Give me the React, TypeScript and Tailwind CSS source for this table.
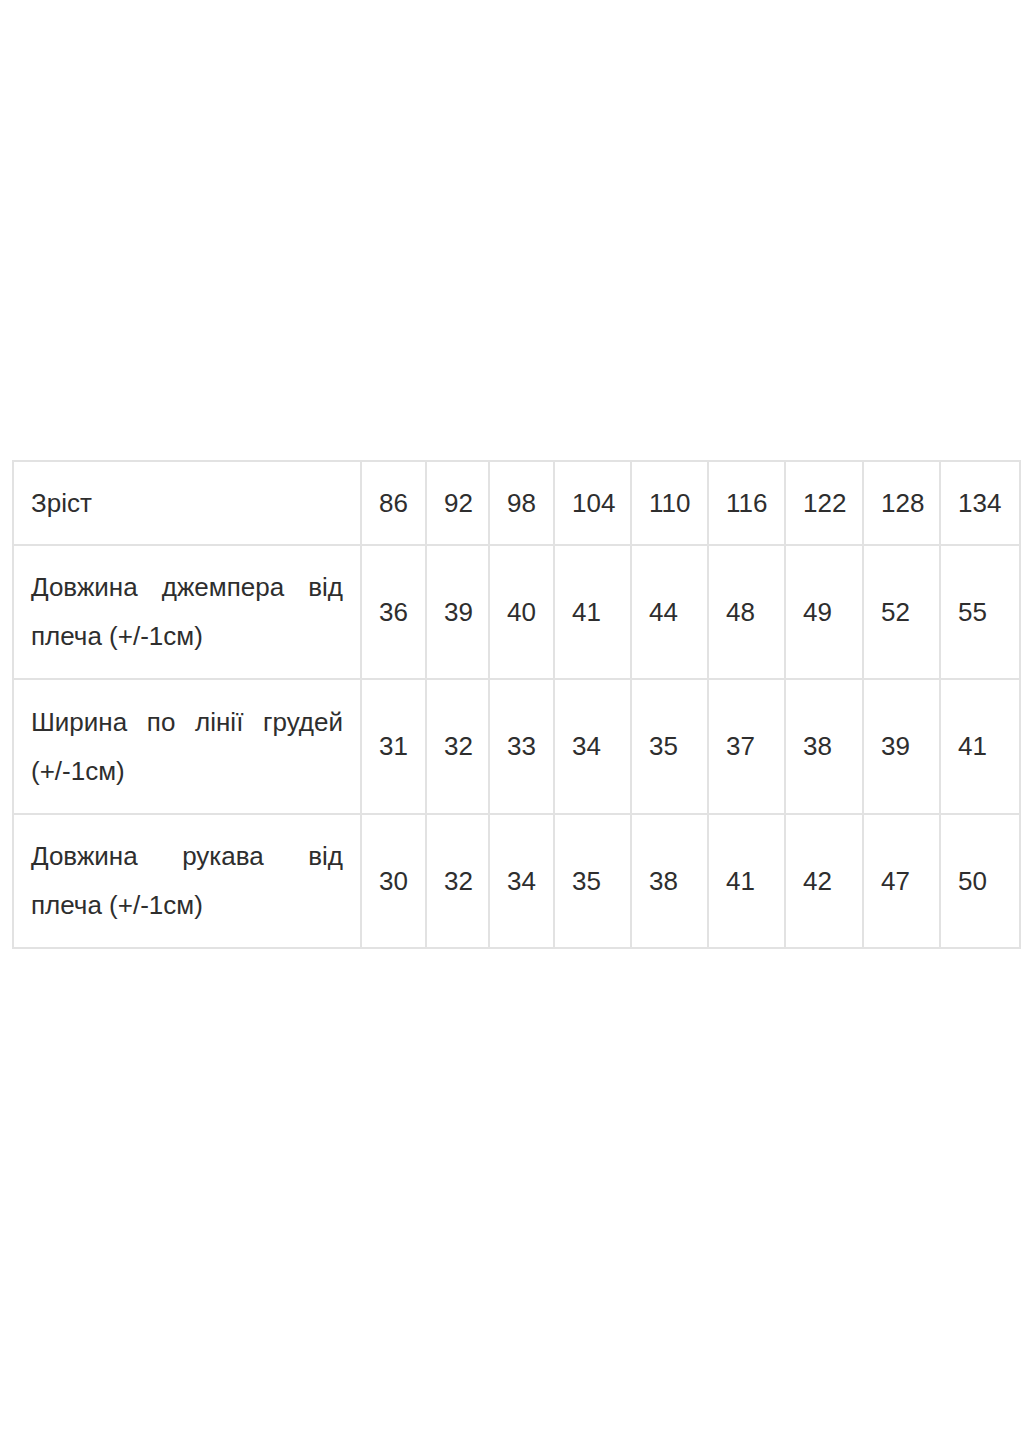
const sizes = ["86", "92", "98", "104", "110", "116", "122", "128", "134"];

const rows: { label: string; values: string[]; h: string }[] = [
  { label: "Довжина джемпера від плеча (+/-1см)", values: ["36", "39", "40", "41", "44", "48", "49", "52", "55"], h: "h-[134px]" },
  { label: "Ширина по лінії грудей (+/-1см)", values: ["31", "32", "33", "34", "35", "37", "38", "39", "41"], h: "h-[135px]" },
  { label: "Довжина рукава від плеча (+/-1см)", values: ["30", "32", "34", "35", "38", "41", "42", "47", "50"], h: "h-[134px]" },
];

const colWidths = ["w-[348px]", "w-[65px]", "w-[63px]", "w-[65px]", "w-[77px]", "w-[77px]", "w-[77px]", "w-[78px]", "w-[77px]", "w-[80px]"];

const base = "border-2 border-[#e2e2e2] px-[17px] py-4 align-middle";
const cell = `${base} text-left`;

export default function App() {
  return (
    <div className="min-h-[1440px] w-[1035px] bg-white pt-[460px] pl-[12px] font-['Liberation_Sans',Arial,sans-serif] text-[26px] leading-[49px] text-[#2e2e2e]">
      <table className="w-[1009px] table-fixed border-collapse">
        <colgroup>
          {colWidths.map((w, i) => (
            <col key={i} className={w} />
          ))}
        </colgroup>
        <tbody>
          <tr className="h-[84px]">
            <td className={cell}>Зріст</td>
            {sizes.map((s) => (
              <td key={s} className={cell}>
                {s}
              </td>
            ))}
          </tr>
          {rows.map((r) => (
            <tr key={r.label} className={r.h}>
              <td className={`${base} text-justify`}>{r.label}</td>
              {r.values.map((v, i) => (
                <td key={i} className={cell}>
                  {v}
                </td>
              ))}
            </tr>
          ))}
        </tbody>
      </table>
    </div>
  );
}
